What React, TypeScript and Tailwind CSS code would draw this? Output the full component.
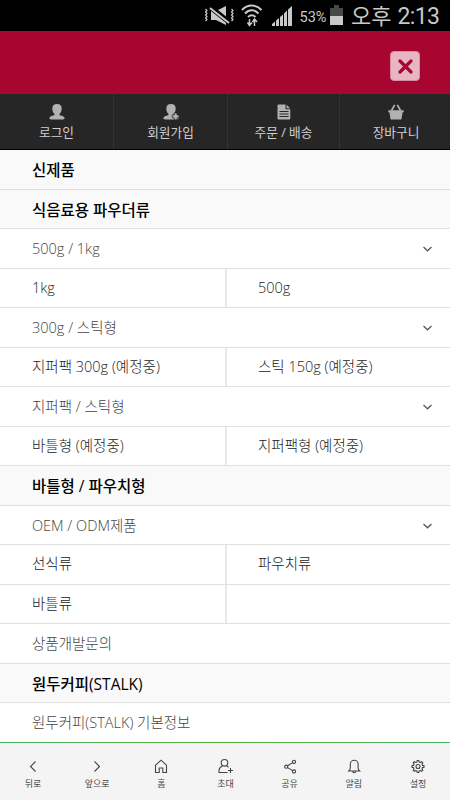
import type { ReactNode } from "react"

const shortcuts = [
  { id: "login", label: "로그인" },
  { id: "join", label: "회원가입" },
  { id: "order", label: "주문 / 배송" },
  { id: "cart", label: "장바구니" },
]

type Row =
  | { kind: "title"; label: string }
  | { kind: "item"; label: string; open?: boolean }
  | { kind: "pair"; cells: [string, string] }

const rows: Row[] = [
  { kind: "title", label: "신제품" },
  { kind: "title", label: "식음료용 파우더류" },
  { kind: "item", label: "500g / 1kg", open: true },
  { kind: "pair", cells: ["1kg", "500g"] },
  { kind: "item", label: "300g / 스틱형", open: true },
  { kind: "pair", cells: ["지퍼팩 300g (예정중)", "스틱 150g (예정중)"] },
  { kind: "item", label: "지퍼팩 / 스틱형", open: true },
  { kind: "pair", cells: ["바틀형 (예정중)", "지퍼팩형 (예정중)"] },
  { kind: "title", label: "바틀형 / 파우치형" },
  { kind: "item", label: "OEM / ODM제품", open: true },
  { kind: "pair", cells: ["선식류", "파우치류"] },
  { kind: "pair", cells: ["바틀류", ""] },
  { kind: "item", label: "상품개발문의" },
  { kind: "title", label: "원두커피(STALK)" },
  { kind: "item", label: "원두커피(STALK) 기본정보" },
]

const tools: { label: string; icon: ReactNode }[] = [
  { label: "뒤로", icon: <path d="M10.500 3.500 5.500 8.500l5 5" /> },
  { label: "앞으로", icon: <path d="m5.500 3.500 5 5-5 5" /> },
  { label: "홈", icon: <path d="M2.500 7.200 8 2.200l5.500 5v7.300h-3.700v-4.500H6.200v4.500H2.500z" /> },
  {
    label: "초대",
    icon: (
      <>
        <circle cx="7.500" cy="4.800" r="3.300" />
        <path d="M10.500 14.500H2v-2.300c0-2 1.300-3.200 3.400-4.300M9.600 7.900l2 1.300M13.500 10v5M11 12.500h5" />
      </>
    ),
  },
  {
    label: "공유",
    icon: (
      <>
        <circle cx="4.200" cy="8.700" r="1.600" />
        <circle cx="12" cy="3.800" r="1.600" />
        <circle cx="12" cy="13.500" r="1.600" />
        <path d="m5.600 7.800 5-3.200M5.600 9.600l5 3" />
      </>
    ),
  },
  {
    label: "알림",
    icon: (
      <path d="M2.800 13c1.200-1 1.500-2 1.500-3.500V6.200a3.900 3.900 0 0 1 7.800 0v3.300c0 1.500.3 2.500 1.500 3.500zM6.700 13.200a1.500 1.500 0 0 0 3 0" />
    ),
  },
  {
    label: "설정",
    icon: (
      <>
        <circle cx="8" cy="8.500" r="2" />
        <path d="M6.900 4 7.200 2.500h1.600L9.100 4l1.300.5 1.300-.8 1.100 1.100-.8 1.300.5 1.300 1.500.3v1.600l-1.500.3-.5 1.300.8 1.300-1.100 1.100-1.300-.8-1.300.5-.3 1.500H7.200L6.900 13l-1.300-.5-1.300.8-1.100-1.100.8-1.300-.5-1.300L2 9.300V7.700l1.500-.3L4 6.100l-.8-1.300 1.100-1.100 1.300.8z" />
      </>
    ),
  },
]

function ShortcutIcon({ id }: { id: string }) {
  return (
    <svg className="h-4 w-4" viewBox="0 0 16 16" fill="#b1b1b1">
      {(id === "login" || id === "join") && (
        <path d="M8 0C4.800 0 3.200 2 3.300 4.800c.1 2.400 1 4.200 2.200 5.200v.9C4.200 11.500.4 12 .4 14.300c0 1.200 1.500 1.200 2.500 1.200h10.200c1 0 2.500 0 2.500-1.200 0-2.300-3.800-2.800-5.100-3.400V10c1.200-1 2.100-2.800 2.200-5.200C12.800 2 11.200 0 8 0z" />
      )}
      {id === "join" && (
        <path d="M11.200 9h2.800v2h2v2.800h-2v2h-2.800v-2h-2V11h2z" stroke="#262626" strokeWidth="0.700" />
      )}
      {id === "order" && (
        <>
          <path d="M2.500.5h7v4.700h4.800v9.300a1 1 0 0 1-1 1H2.500a1 1 0 0 1-1-1v-13a1 1 0 0 1 1-1zM10.600.8l3.500 3.400h-3.500z" />
          <path d="M3.500 7.500h9M3.500 10h9M3.500 12.500h9" stroke="#262626" strokeWidth="1" />
        </>
      )}
      {id === "cart" && (
        <>
          <path d="M.3 6.300h15.400v1.900h-1.100l-1.200 7.300H2.600L1.400 8.200H.3z" />
          <path d="M3.500 6.500 6.700.8M12.500 6.500 9.300.8" fill="none" stroke="#b1b1b1" strokeWidth="1.700" />
        </>
      )}
    </svg>
  )
}

function StatusBar() {
  return (
    <div className="flex h-[31px] shrink-0 items-center bg-black pl-[204px] text-[#c9c9c9]">
      <svg className="h-[31px] w-[141px] shrink-0" viewBox="204 0 141 31" fill="none" stroke="currentColor">
        <path d="m205.500 9 1.500 1.500-1.500 1.500 1.500 1.500-1.500 1.500 1.500 1.500-1.500 1.500 1.500 1.500-1.500 1.500M231.500 9l1.500 1.500-1.500 1.500 1.500 1.500-1.500 1.500 1.500 1.500-1.500 1.500 1.500 1.500-1.500 1.500" strokeWidth="1.200" />
        <path d="M211 11h5l10-5v19l-10-5h-5z" fill="currentColor" stroke="none" />
        <path d="m210 7 19 15" stroke="#000" strokeWidth="5" />
        <path d="m210 8 19 15" strokeWidth="2" />
        <path d="M242 10c5.500-6 14-6 19.500 0M245 13.500c4-4.200 9.500-4.200 13.500 0M248 17c2.300-2.200 5.200-2.200 7.500 0" strokeWidth="2" />
        <path d="M249.500 19v6M247.500 22.500l2 3 2.500-3M254.500 26v-6M252.500 22l2-3 2.500 3" strokeWidth="1.500" />
        <path d="M272 26v-2l3-2.500V26zM276 26v-5.500l3-2.500v8zM280 26v-9l3-2.500V26zM284 26V13.500l3-3V26zM288 26V9.500l4-3.500v20z" fill="currentColor" stroke="none" />
        <path d="M334 5h5v3h4v8h-13V8h4z" fill="#484848" stroke="none" />
        <path d="M330 16h13v9h-13z" fill="currentColor" stroke="none" />
        <text x="299.500" y="22" fontSize="14.500" textLength="27" lengthAdjust="spacingAndGlyphs" fill="currentColor" stroke="none" fontFamily="Roboto, sans-serif">
          53%
        </text>
      </svg>
      <span className="ml-[6px] flex items-baseline gap-[6px] pt-[2px] whitespace-nowrap font-['Roboto','Noto_Sans_CJK_KR',sans-serif] text-[22px] leading-[29px] font-normal">
        <span>오후</span>
        <span className="text-[23px] tracking-[-0.6px]">2:13</span>
      </span>
    </div>
  )
}

function MenuRow({ row }: { row: Row }) {
  if (row.kind === "title") {
    return (
      <div className="h-[39.5px] border-b border-[#dfdfdf] bg-[#f9f9f9] pl-8 text-[15.500px] leading-[40px] font-medium text-black">
        {row.label}
      </div>
    )
  }
  if (row.kind === "pair") {
    return (
      <div className="flex h-[39.5px] border-b border-[#dfdfdf] leading-[38px] text-[#222]">
        <div className="w-[227px] border-r-2 border-[#e8e8e8] pl-8">{row.cells[0]}</div>
        <div className="pl-[31px]">{row.cells[1]}</div>
      </div>
    )
  }
  return (
    <div className="flex h-[39.5px] items-center justify-between border-b border-[#dfdfdf] pt-[2px] pr-[18px] pl-8 text-[#444]">
      <span className="leading-[36px]">{row.label}</span>
      {row.open && (
        <svg className="h-[6px] w-[9px]" viewBox="0 0 9 6" fill="none" stroke="#555" strokeWidth="1.200">
          <path d="m.5 1 4 3.800 4-3.800" />
        </svg>
      )}
    </div>
  )
}

export default function App() {
  return (
    <div className="flex h-[800px] w-[450px] flex-col overflow-hidden bg-white font-['Open_Sans','Noto_Sans_CJK_KR',sans-serif]">
      <StatusBar />
      <header className="flex h-[62px] shrink-0 items-center justify-end bg-[#a80530] pt-2 pr-[30px]">
        <button className="flex h-[30px] w-[30px] items-center justify-center rounded-[4px] border border-[#d98da0] bg-[#e8b5c3]">
          <svg className="h-[15px] w-[15px]" viewBox="0 0 15 15" stroke="#a80530" strokeWidth="3.200" strokeLinecap="round">
            <path d="m2 2 11 11M13 2 2 13" />
          </svg>
        </button>
      </header>
      <nav className="grid h-[57px] shrink-0 grid-cols-[114px_114px_112px_112px] border-t border-b border-t-[#a80530] border-b-black bg-[#262626]">
        {shortcuts.map((s) => (
          <div key={s.id} className="flex flex-col items-center border-r border-dotted border-[#404040] pt-[10px] last:border-r-0">
            <ShortcutIcon id={s.id} />
            <span className="mt-[2px] text-[12.700px] leading-[20px] text-[#d0d0d0]">{s.label}</span>
          </div>
        ))}
      </nav>
      <main className="h-[592px] shrink-0 overflow-hidden text-[14.500px] font-light whitespace-nowrap">
        {rows.map((row, i) => (
          <MenuRow key={i} row={row} />
        ))}
      </main>
      <div className="h-px shrink-0 bg-linear-to-r from-[#48b262] via-[#58ab38] to-[#48b262]" />
      <footer className="flex flex-1 bg-[#f4f4f4] pl-px text-[#444]">
        {tools.map((t) => (
          <div key={t.label} className="flex flex-1 flex-col items-center pt-[15px]">
            <svg className="h-4 w-4" viewBox="0 0 16 16" fill="none" stroke="currentColor" strokeWidth="1.100">
              {t.icon}
            </svg>
            <span className="text-[9px] leading-[19px]">{t.label}</span>
          </div>
        ))}
      </footer>
    </div>
  )
}
